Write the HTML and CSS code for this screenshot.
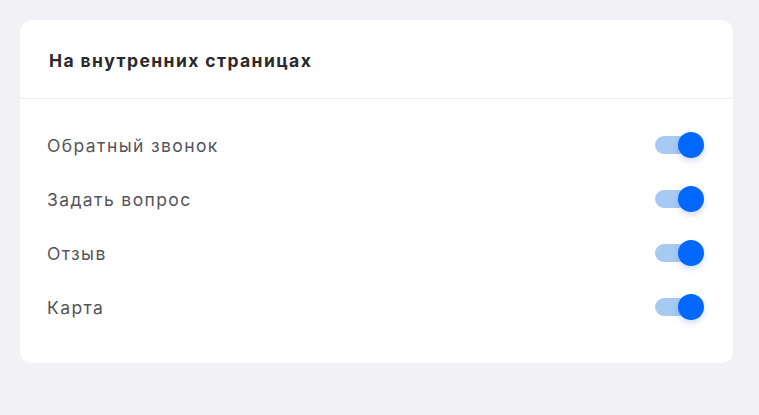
FILE: index.html
```html
<!DOCTYPE html>
<html>
<head>
    <title>Настройки</title>
    <meta name="viewport" content="width=device-width, initial-scale=1.0">
    <link rel="stylesheet" href="styles.css">
</head>
<body>
    <div class="settings-card">
        <div class="card-header">На внутренних страницах</div>
        <div class="card-body">
            <label class="setting-row">
                <span class="setting-label">Обратный звонок</span>
                <input type="checkbox" class="switch" checked>
            </label>
            <label class="setting-row">
                <span class="setting-label">Задать вопрос</span>
                <input type="checkbox" class="switch" checked>
            </label>
            <label class="setting-row">
                <span class="setting-label">Отзыв</span>
                <input type="checkbox" class="switch" checked>
            </label>
            <label class="setting-row">
                <span class="setting-label">Карта</span>
                <input type="checkbox" class="switch" checked>
            </label>
        </div>
    </div>
</body>
</html>
```

FILE: styles.css
```css
body {
    margin: 0;
    padding: 20px 26px 20px 20px;
    background: #f2f1f5;
    font-family: 'Inter', 'Open Sans', sans-serif;
}
.settings-card {
    background: #fff;
    border-radius: 12px;
    overflow: hidden;
}
.card-header {
    height: 79px;
    box-sizing: border-box;
    padding: 2px 28px 0 29px;
    display: flex;
    align-items: center;
    font-size: 17.5px;
    font-weight: 700;
    letter-spacing: 1.4px;
    color: #2a2a2c;
    border-bottom: 1px solid #eeedf1;
}
.card-body {
    padding: 19px 28px 29px 27px;
}
.setting-row {
    height: 54px;
    display: flex;
    align-items: center;
    justify-content: space-between;
    cursor: pointer;
}
.setting-label {
    font-size: 17.5px;
    letter-spacing: 1.4px;
    color: #555458;
}
.switch {
    appearance: none;
    -webkit-appearance: none;
    margin: 0 5px 0 0;
    position: relative;
    width: 45px;
    height: 18px;
    border-radius: 9px;
    background: #a7caf2;
    cursor: pointer;
}
.switch::after {
    content: '';
    position: absolute;
    top: -4px;
    right: -4px;
    width: 26px;
    height: 26px;
    border-radius: 50%;
    background: #0068ff;
    box-shadow: 0 3px 6px rgba(0, 60, 160, 0.18);
}
```
